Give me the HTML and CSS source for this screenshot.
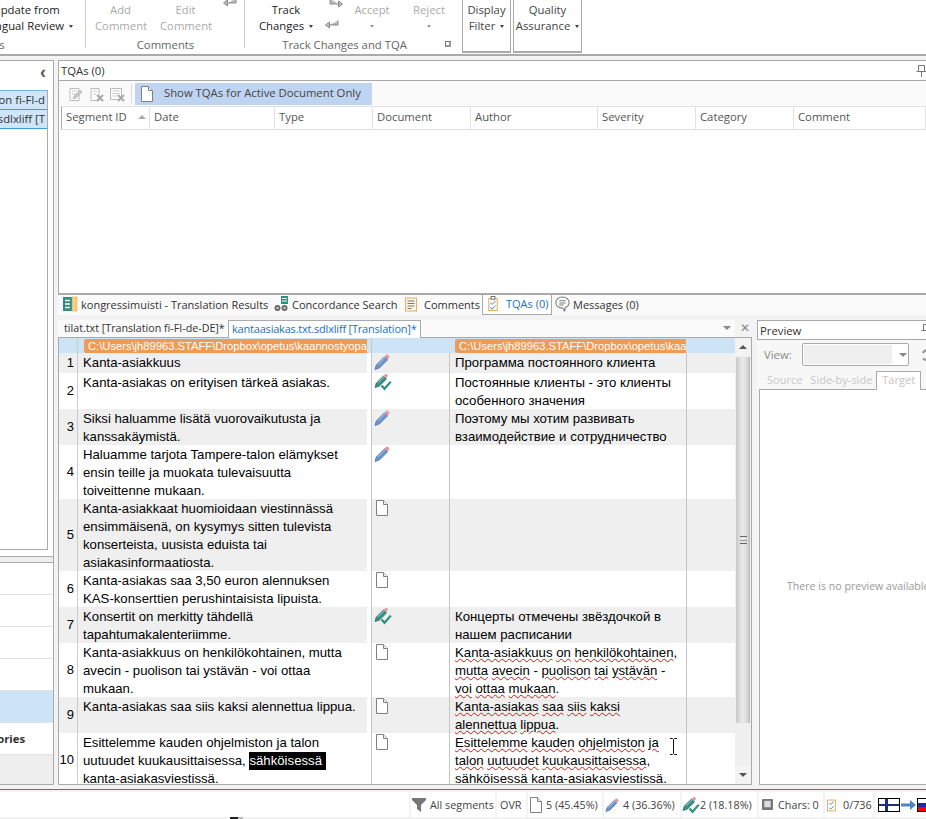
FILE: index.html
```html
<!DOCTYPE html>
<html lang="en">
<head>
    <meta charset="UTF-8">
    <meta name="viewport" content="width=device-width, initial-scale=1.0">
    <title>Editor - kantaasiakas.txt.sdlxliff</title>
    <link rel="stylesheet" href="styles.css">
</head>
<body>
    <svg class="sprite" xmlns="http://www.w3.org/2000/svg">
        <symbol id="i-doc" viewBox="0 0 14 16">
            <path d="M1.5 .5H8.5L12.5 4.5V15.5H1.5Z" fill="#fff" stroke="#808080"/>
            <path d="M8.5 .5V4.5H12.5" fill="#eee" stroke="#808080"/>
        </symbol>
        <symbol id="i-pencil" viewBox="0 0 16 16">
            <path d="M1 15.5L2.2 11L10.5 2.8L13.6 5.8L5.4 14Z" fill="#6d94c9" stroke="#4d77ad" stroke-width=".8"/>
            <path d="M4 10.5L11 3.6" stroke="#b7cdea" fill="none"/>
            <path d="M10.8 2.4L12.4 .8C13 .4 13.6 .4 14.2 1L15.1 1.9C15.6 2.5 15.6 3.1 15.2 3.6L13.7 5.4Z" fill="#e8969c"/>
        </symbol>
        <symbol id="i-done" viewBox="0 0 18 18">
            <path d="M1 14.5L2.2 10.2L9.5 3L12.5 6L5.2 13.2Z" fill="#3c8f82" stroke="#2b7468" stroke-width=".8"/>
            <path d="M4 9.8L10 3.8" stroke="#a6d3cb" fill="none"/>
            <path d="M9.8 2.6L11.3 1.2C11.9 .8 12.4 .8 13 1.3L13.6 1.9C14.1 2.5 14 3 13.6 3.5L12.4 5Z" fill="#e8969c"/>
            <path d="M7.5 12.5L10.5 15.8L16.8 8.6" fill="none" stroke="#2f8f7d" stroke-width="2.2"/>
        </symbol>
        <symbol id="i-return" viewBox="0 0 16 12">
            <path d="M14 1.5V6H5.5M5.5 3V9L1.5 6Z" fill="#bbb" stroke="#8a8a8a"/>
        </symbol>
        <symbol id="i-forward" viewBox="0 0 16 12">
            <path d="M2 .5V6H10.5M10.5 3V9L14.5 6Z" fill="#bbb" stroke="#8a8a8a"/>
        </symbol>
        <symbol id="i-pin" viewBox="0 0 10 12">
            <path d="M2.5 .5H8.5V6.5H2.5ZM.5 6.5H10M5.5 6.5V12" fill="#fff" stroke="#777"/>
        </symbol>
    </svg>

    <header class="ribbon">
        <section class="rgroup rgroup-update">
            <div class="rbtns">
                <div class="rbtn">Update from<br>Bilingual Review <i class="caret"></i></div>
            </div>
            <div class="rlabel">Actions</div>
        </section>
        <section class="rgroup rgroup-comments">
            <div class="rbtns">
                <div class="rbtn off">Add<br>Comment</div>
                <div class="rbtn off">Edit<br>Comment</div>
                <svg class="top-arrow"><use href="#i-return"/></svg>
            </div>
            <div class="rlabel">Comments</div>
        </section>
        <section class="rgroup rgroup-track">
            <div class="rbtns">
                <div class="rbtn">Track<br>Changes <i class="caret"></i></div>
                <div class="change-arrows">
                    <svg class="arrow-small forward"><use href="#i-forward"/></svg>
                    <svg class="arrow-small"><use href="#i-return"/></svg>
                </div>
                <div class="rbtn off accept">Accept<br><i class="caret"></i></div>
                <div class="rbtn off reject">Reject<br><i class="caret"></i></div>
            </div>
            <div class="rlabel">Track Changes and TQA<span class="launcher"></span></div>
        </section>
        <section class="rbox filter">Display<br>Filter <i class="caret"></i></section>
        <section class="rbox qa">Quality<br>Assurance <i class="caret"></i></section>
    </header>

    <main class="workspace">
        <aside class="nav">
            <div class="nav-head"><span class="chevron">‹</span></div>
            <div class="file-box">
                <div class="file-row">Translation fi-FI-d</div>
                <div class="file-row">kantaasiakas.txt.sdlxliff [T</div>
            </div>
            <div class="nav-band"></div>
            <div class="nav-link"></div>
            <div class="nav-link"></div>
            <div class="nav-link"></div>
            <div class="nav-link"></div>
            <div class="nav-link active"></div>
            <div class="nav-link bold">Translation Memories</div>
            <div class="nav-foot"></div>
        </aside>

        <div class="center">
            <section class="tqa-panel">
                <div class="panel-head">TQAs (0)<svg class="pin"><use href="#i-pin"/></svg></div>
                <div class="tqa-tools">
                    <svg class="tool-ico" viewBox="0 0 16 16"><path d="M3 2.5H12V14.5H3Z" fill="#fff" stroke="#bbb"/><path d="M5 5H10M5 8H8" stroke="#ccc"/><path d="M6 13L7 10L13 4L15 6L9 12Z" fill="#c8c8c8" stroke="#aaa" stroke-width=".6"/></svg>
                    <svg class="tool-ico" viewBox="0 0 16 16"><path d="M3 2.5H11V14.5H3Z" fill="#fff" stroke="#bbb"/><path d="M5 5H9M5 8H8" stroke="#ccc"/><path d="M9 9L15 15M15 9L9 15" stroke="#aaa" stroke-width="2"/></svg>
                    <svg class="tool-ico" viewBox="0 0 16 16"><path d="M1.5 2.5H12.5V13.5H1.5Z" fill="#fff" stroke="#bbb"/><path d="M3.5 5H10.5M3.5 7.5H10.5M3.5 10H8" stroke="#ccc"/><path d="M9 9L15 15M15 9L9 15" stroke="#aaa" stroke-width="2"/></svg>
                    <span class="tool-sep"></span>
                    <div class="tool-toggle"><svg class="doc"><use href="#i-doc"/></svg>Show TQAs for Active Document Only</div>
                </div>
                <div class="tqa-table">
                    <div class="th">Segment ID<i class="sort"></i></div>
                    <div class="th">Date</div>
                    <div class="th">Type</div>
                    <div class="th">Document</div>
                    <div class="th">Author</div>
                    <div class="th">Severity</div>
                    <div class="th">Category</div>
                    <div class="th">Comment</div>
                </div>
            </section>

            <nav class="tool-tabs">
                <div class="ttab first">
                    <svg class="ttab-ico" viewBox="0 0 15 16"><rect x="0" y="1" width="9" height="14" fill="#2f8f7d"/><rect x="9" y="1" width="5" height="14" fill="#f3cf8a" stroke="#d8a74d" stroke-width=".6"/><path d="M2 4.5H7M2 8H7M2 11.5H7" stroke="#fff" stroke-width="1.4"/></svg>
                    kongressimuisti - Translation Results
                </div>
                <div class="ttab conc">
                    <svg class="ttab-ico" viewBox="0 0 15 16"><circle cx="3.5" cy="12" r="3" fill="#666"/><circle cx="10.5" cy="12" r="3" fill="#666"/><circle cx="3.5" cy="12" r="1.2" fill="#ccc"/><circle cx="10.5" cy="12" r="1.2" fill="#ccc"/><rect x="7" y="0" width="7" height="8" fill="#2f8f7d"/><path d="M8 2.5H13M8 5H13" stroke="#fff"/></svg>
                    Concordance Search
                </div>
                <div class="ttab comm">
                    <svg class="ttab-ico small" viewBox="0 0 12 14"><rect x=".5" y=".5" width="11" height="13" fill="#fdf6e4" stroke="#dcb267"/><path d="M2.5 3.5H9.5M2.5 6H9.5M2.5 8.5H9.5M2.5 11H6.5" stroke="#777"/></svg>
                    Comments
                </div>
                <div class="ttab active">
                    <svg class="ttab-ico small" viewBox="0 0 12 16"><rect x="1.5" y="2.5" width="9" height="13" fill="#fff" stroke="#e0a94f"/><rect x="4" y=".5" width="4" height="3" fill="#fff" stroke="#666"/><path d="M3 7L5 9L9 5M3 12L5 14L9 10" fill="none" stroke="#3f7fb5"/></svg>
                    TQAs (0)
                </div>
                <div class="ttab msg">
                    <svg class="ttab-ico" viewBox="0 0 14 15"><path d="M7 1C3.4 1 .8 3.2 .8 6.2C.8 9.2 3.4 11.2 7 11.2L9 14L9.6 10.8C11.8 10 13.2 8.3 13.2 6.2C13.2 3.2 10.6 1 7 1Z" fill="#fff" stroke="#777"/><path d="M4 4.5H10M4 6.5H10M4 8.5H8" stroke="#777"/></svg>
                    Messages (0)
                </div>
            </nav>

            <div class="work-row">
                <section class="editor">
                    <div class="doc-tabs">
                        <div class="dtab">tilat.txt [Translation fi-FI-de-DE]*</div>
                        <div class="dtab active">kantaasiakas.txt.sdlxliff [Translation]*</div>
                        <div class="doc-tools"><i class="caret big"></i><span class="close">✕</span></div>
                    </div>
                    <div class="grid-wrap">
                        <div class="seg-grid">
                            <div class="seg head">
                                <div class="num"></div>
                                <div class="src"><span class="path">C:\Users\jh89963.STAFF\Dropbox\opetus\kaannostyopaja\kantaasiakas.txt</span></div>
                                <div class="gut"></div>
                                <div class="stat"></div>
                                <div class="trg"><span class="path">C:\Users\jh89963.STAFF\Dropbox\opetus\kaannostyopaja\kantaasiakas.txt</span></div>
                                <div class="rest"></div>
                            </div>

                            <div class="seg alt">
                                <div class="num">1</div>
                                <div class="src">Kanta-asiakkuus</div>
                                <div class="gut"></div>
                                <div class="stat"><svg class="ico-pencil"><use href="#i-pencil"/></svg></div>
                                <div class="trg">Программа постоянного клиента</div>
                                <div class="rest"></div>
                            </div>
                            <div class="seg">
                                <div class="num">2</div>
                                <div class="src">Kanta-asiakas on erityisen tärkeä asiakas.</div>
                                <div class="gut"></div>
                                <div class="stat"><svg class="ico-done"><use href="#i-done"/></svg></div>
                                <div class="trg">Постоянные клиенты - это клиенты особенного значения</div>
                                <div class="rest"></div>
                            </div>
                            <div class="seg alt">
                                <div class="num">3</div>
                                <div class="src">Siksi haluamme lisätä vuorovaikutusta ja kanssakäymistä.</div>
                                <div class="gut"></div>
                                <div class="stat"><svg class="ico-pencil"><use href="#i-pencil"/></svg></div>
                                <div class="trg">Поэтому мы хотим развивать взаимодействие и сотрудничество</div>
                                <div class="rest"></div>
                            </div>
                            <div class="seg">
                                <div class="num">4</div>
                                <div class="src">Haluamme tarjota Tampere-talon elämykset ensin teille ja muokata tulevaisuutta toiveittenne mukaan.</div>
                                <div class="gut"></div>
                                <div class="stat"><svg class="ico-pencil"><use href="#i-pencil"/></svg></div>
                                <div class="trg"></div>
                                <div class="rest"></div>
                            </div>
                            <div class="seg alt">
                                <div class="num">5</div>
                                <div class="src">Kanta-asiakkaat huomioidaan viestinnässä ensimmäisenä, on kysymys sitten tulevista konserteista, uusista eduista tai asiakasinformaatiosta.</div>
                                <div class="gut"></div>
                                <div class="stat"><svg class="ico-doc"><use href="#i-doc"/></svg></div>
                                <div class="trg"></div>
                                <div class="rest"></div>
                            </div>
                            <div class="seg">
                                <div class="num">6</div>
                                <div class="src">Kanta-asiakas saa 3,50 euron alennuksen KAS-konserttien perushintaisista lipuista.</div>
                                <div class="gut"></div>
                                <div class="stat"><svg class="ico-doc"><use href="#i-doc"/></svg></div>
                                <div class="trg"></div>
                                <div class="rest"></div>
                            </div>
                            <div class="seg alt">
                                <div class="num">7</div>
                                <div class="src">Konsertit on merkitty tähdellä tapahtumakalenteriimme.</div>
                                <div class="gut"></div>
                                <div class="stat"><svg class="ico-done"><use href="#i-done"/></svg></div>
                                <div class="trg">Концерты отмечены звёздочкой в нашем расписании</div>
                                <div class="rest"></div>
                            </div>
                            <div class="seg">
                                <div class="num">8</div>
                                <div class="src">Kanta-asiakkuus on henkilökohtainen, mutta avecin - puolison tai ystävän - voi ottaa mukaan.</div>
                                <div class="gut"></div>
                                <div class="stat"><svg class="ico-doc"><use href="#i-doc"/></svg></div>
                                <div class="trg"><u>Kanta-asiakkuus</u> <u>on</u> <u>henkilökohtainen</u>, <u>mutta</u> <u>avecin</u> - <u>puolison</u> <u>tai</u> <u>ystävän</u> - <u>voi</u> <u>ottaa</u> <u>mukaan</u>.</div>
                                <div class="rest"></div>
                            </div>
                            <div class="seg alt">
                                <div class="num">9</div>
                                <div class="src">Kanta-asiakas saa siis kaksi alennettua lippua.</div>
                                <div class="gut"></div>
                                <div class="stat"><svg class="ico-doc"><use href="#i-doc"/></svg></div>
                                <div class="trg"><u>Kanta-asiakas</u> <u>saa</u> <u>siis</u> <u>kaksi</u> <u>alennettua</u> <u>lippua</u>.</div>
                                <div class="rest"></div>
                            </div>
                            <div class="seg">
                                <div class="num">10</div>
                                <div class="src">Esittelemme kauden ohjelmiston ja talon uutuudet kuukausittaisessa, <span class="selected">sähköisessä </span> <span class="nobreak">kanta-asiakasviestissä.</span></div>
                                <div class="gut"></div>
                                <div class="stat"><svg class="ico-doc"><use href="#i-doc"/></svg></div>
                                <div class="trg"><u>Esittelemme</u> <u>kauden</u> <u>ohjelmiston</u> <u>ja</u> <u>talon</u> <u>uutuudet</u> <u>kuukausittaisessa</u>, <u>sähköisessä</u> <u>kanta-asiakasviestissä</u>.</div>
                                <div class="rest"></div>
                            </div>
                        </div>
                        <div class="vscroll">
                            <div class="sbtn"><i class="up"></i></div>
                            <div class="thumb"><span class="grip"></span></div>
                            <div class="strack"></div>
                            <div class="sbtn"><i class="caret big"></i></div>
                        </div>
                        <svg class="ibeam" viewBox="0 0 9 17"><path d="M1 .5H3.5L4.5 1.5L5.5 .5H8M4.5 1.5V15.5M1 16.5H3.5L4.5 15.5L5.5 16.5H8" fill="none" stroke="#111"/></svg>
                    </div>
                </section>

                <section class="preview">
                    <div class="panel-head">Preview<svg class="pin"><use href="#i-pin"/></svg></div>
                    <div class="view-row">
                        <span class="view-label">View:</span>
                        <div class="combo"><span class="combo-field"></span><i class="caret big"></i></div>
                        <svg class="refresh" viewBox="0 0 12 14"><path d="M10 3.5A5 5 0 0 0 2 5M2 10.5A5 5 0 0 0 10 9" fill="none" stroke="#999" stroke-width="2.4"/></svg>
                    </div>
                    <div class="prev-tabs">
                        <span class="ptab">Source</span>
                        <span class="ptab">Side-by-side</span>
                        <span class="ptab active">Target</span>
                    </div>
                    <div class="prev-body">There is no preview available</div>
                </section>
            </div>
        </div>
    </main>

    <div class="blue-line"></div>

    <footer class="statusbar">
        <div class="st grow"></div>
        <div class="st w-filter">
            <svg class="st-ico funnel" viewBox="0 0 14 14"><path d="M0 0H14V2L9 7V14L5 11V7L0 2Z" fill="#777"/></svg>All segments
        </div>
        <div class="st w-ovr">OVR</div>
        <div class="st w-doc"><svg class="st-doc"><use href="#i-doc"/></svg>5 (45.45%)</div>
        <div class="st w-pen"><svg class="st-ico"><use href="#i-pencil"/></svg>4 (36.36%)</div>
        <div class="st w-done"><svg class="st-done"><use href="#i-done"/></svg>2 (18.18%)</div>
        <div class="st w-chars">
            <svg class="st-key" viewBox="0 0 12 12"><rect width="12" height="12" rx="1" fill="#777"/><rect x="2.5" y="2" width="7" height="7" fill="#ddd"/></svg>Chars: 0
        </div>
        <div class="st w-tqa">
            <svg class="st-clip" viewBox="0 0 10 14"><rect x=".5" y="1.5" width="9" height="12" fill="#fff" stroke="#e0a94f"/><path d="M2.5 5L4 6.5L7.5 3.5M2.5 10L4 11.5L7.5 8.5" fill="none" stroke="#3f7fb5"/></svg>0/736
        </div>
        <div class="st-flags">
            <div class="flag-fi"></div>
            <svg class="flag-arrow" viewBox="0 0 15 10"><path d="M0 3.5H9V0L15 5L9 10V6.5H0Z" fill="#4f86c0"/></svg>
            <div class="flag-ru"></div>
        </div>
    </footer>
    <div class="taskbar-bit"></div>
</body>
</html>
```

FILE: styles.css
```css
html, body {
    margin: 0;
    padding: 0;
}
body {
    width: 926px;
    height: 819px;
    overflow: hidden;
    display: flex;
    flex-direction: column;
    position: relative;
    background: #f3f3f3;
    font-family: "Open Sans", sans-serif;
    font-size: 11.3px;
    color: #444;
}
.sprite { display: none; }
i { font-style: normal; }

.caret {
    display: inline-block;
    border-left: 2.5px solid transparent;
    border-right: 2.5px solid transparent;
    border-top: 3px solid #444;
    vertical-align: middle;
    margin-left: 2px;
}
.caret.big {
    border-left-width: 4px;
    border-right-width: 4px;
    border-top: 4px solid #888;
    margin-left: 0;
}

/* ribbon */
.ribbon {
    height: 54px;
    flex: none;
    display: flex;
    background: #fff;
    border-bottom: 2px solid #aaa;
}
.rgroup {
    display: flex;
    flex-direction: column;
    height: 53px;
    background: linear-gradient(#ccc, #ccc) right top / 1px 48px no-repeat;
    overflow: hidden;
    flex: none;
}
.rbtns {
    display: flex;
    flex: none;
    height: 35px;
    padding-top: 2px;
}
.rbtn {
    line-height: 16px;
    text-align: center;
    white-space: nowrap;
    color: #222;
    flex: none;
}
.rbtn.off { color: #aaa; width: 51px; }
.rbtn.off .caret { border-top-color: #999; margin-left: 0; }
.rlabel {
    line-height: 16px;
    text-align: center;
    color: #666;
    white-space: nowrap;
    position: relative;
}
.rgroup-update { width: 86px; }
.rgroup-update .rbtns { justify-content: flex-end; padding-right: 13px; }
.rgroup-update .rlabel { text-align: left; margin-left: -34px; }
.rgroup-comments { width: 159px; }
.rgroup-comments .rbtns { padding-left: 9px; gap: 14px; }
.top-arrow { width: 16px; height: 12px; margin: -5px 0 0 -3px; flex: none; }
.rgroup-track { width: 217px; background: none; }
.rgroup-track .rbtns { padding-left: 14px; }
.rgroup-track .rbtn:first-child { width: 54px; }
.change-arrows {
    width: 26px;
    margin-left: 11px;
    display: flex;
    flex-direction: column;
    margin-top: -4px;
    gap: 9px;
    flex: none;
}
.arrow-small { width: 16px; height: 12px; }
.arrow-small.forward { margin-left: 4px; }
.rbtn.accept { width: 60px; margin-left: -8px; }
.rbtn.reject { width: 54px; }
.rgroup-track .rlabel { width: 199px; }
.launcher {
    position: absolute;
    right: -7px;
    top: 4px;
    width: 6px;
    height: 6px;
    border-left: 1px solid #777;
    border-top: 1px solid #777;
    border-right: 2px solid #999;
    border-bottom: 2px solid #999;
    box-sizing: border-box;
}
.rbox {
    flex: none;
    height: 53px;
    box-sizing: border-box;
    padding-top: 2px;
    line-height: 16px;
    text-align: center;
    border: 1px solid #aaa;
    border-top: none;
    border-bottom-width: 2px;
    white-space: nowrap;
}
.filter { width: 49px; }
.qa { width: 69px; margin-left: 2px; }

/* main layout */
.workspace {
    height: 725px;
    flex: none;
    display: flex;
    padding: 4px 0 1px;
}
.nav {
    width: 53px;
    flex: none;
    display: flex;
    flex-direction: column;
    background: #fff;
    border-top: 1px solid #aaa;
    border-right: 1px solid #aaa;
    border-bottom: 1px solid #aaa;
    overflow: hidden;
}
.nav-head {
    height: 29px;
    flex: none;
    display: flex;
    justify-content: flex-end;
    padding-right: 7px;
    box-sizing: border-box;
}
.chevron {
    font: bold 18px/22px "Liberation Sans", sans-serif;
    color: #555;
}
.file-box {
    flex: none;
    width: 48px;
    height: 460px;
    border-right: 1px solid #aaa;
    border-bottom: 1px solid #aaa;
    border-top: 1px solid #7fb4de;
    box-sizing: border-box;
}
.file-row {
    height: 18px;
    display: flex;
    justify-content: flex-end;
    white-space: nowrap;
    overflow: hidden;
    line-height: 17px;
    padding-right: 2px;
    color: #333;
    background: #cfe5f8;
    border-bottom: 1px solid #3f9bdc;
}
.nav-band {
    height: 5px;
    flex: none;
    margin-top: 6px;
    background: #eee;
    border-top: 1px solid #aaa;
    border-bottom: 1px solid #aaa;
}
.nav-link {
    height: 31px;
    flex: none;
    border-bottom: 1px solid #e2e2e2;
    display: flex;
    justify-content: flex-end;
    align-items: center;
    padding-right: 28px;
    white-space: nowrap;
    color: #333;
}
.nav-link.active { background: #cde4f7; }
.nav-link.bold { font-weight: 700; }
.nav-foot { flex: 1; background: #eee; }

.center {
    width: 868px;
    margin-left: 4px;
    flex: none;
    display: flex;
    flex-direction: column;
}

/* panels */
.panel-head {
    height: 19px;
    flex: none;
    line-height: 19px;
    padding-left: 2px;
    background: #fff;
    border-top: 1px solid #aaa;
    border-bottom: 1px solid #aaa;
    display: flex;
    align-items: center;
    position: relative;
    color: #333;
}
.pin {
    position: absolute;
    right: 0;
    top: 4px;
    width: 10px;
    height: 12px;
}
.tqa-panel {
    height: 235px;
    flex: none;
    box-sizing: border-box;
    background: #fff;
    border-left: 1px solid #aaa;
    border-bottom: 2px solid #aaa;
    display: flex;
    flex-direction: column;
}
.tqa-tools {
    height: 25px;
    flex: none;
    background: #fafafa;
    display: flex;
    align-items: center;
    padding-left: 8px;
    box-sizing: border-box;
}
.tool-ico { width: 16px; height: 16px; margin-right: 5px; flex: none; }
.tool-sep { width: 1px; height: 19px; background: #ddd; margin: 0 3px 0 1px; }
.tool-toggle {
    width: 237px;
    height: 22px;
    display: flex;
    align-items: center;
    background: #bfd4f1;
    color: #444;
    line-height: 20px;
    white-space: nowrap;
    box-sizing: border-box;
    padding: 0 0 2px 5px;
}
.doc { width: 14px; height: 16px; margin: 2px 10px 0 0; }
.tqa-table {
    height: 24px;
    margin-left: 2px;
    flex: none;
    display: grid;
    grid-template-columns: 88px 125px 98px 98px 127px 98px 98px 1fr;
    border-top: 1px solid #e2e2e2;
    border-left: 1px solid #aaa;
    border-bottom: 1px solid #e2e2e2;
    box-sizing: border-box;
}
.th {
    border-right: 1px solid #e2e2e2;
    line-height: 20px;
    padding-left: 4px;
    white-space: nowrap;
    position: relative;
    color: #555;
}
.sort {
    position: absolute;
    right: 3px;
    top: 8px;
    border-left: 4px solid transparent;
    border-right: 4px solid transparent;
    border-bottom: 4px solid #aaa;
}

/* tool tabs */
.tool-tabs {
    height: 20px;
    flex: none;
    background: #fafafa;
    display: flex;
    align-items: center;
    font-size: 11px;
    color: #333;
    white-space: nowrap;
}
.ttab {
    display: flex;
    align-items: center;
    height: 20px;
    padding-bottom: 2px;
    box-sizing: border-box;
}
.ttab-ico { width: 15px; height: 16px; margin-right: 3px; flex: none; }
.ttab-ico.small { width: 12px; height: 15px; margin-right: 7px; }
.ttab.first { margin-left: 5px; width: 211px; }
.ttab.conc { width: 131px; }
.ttab.comm { width: 77px; }
.ttab.active {
    width: 70px;
    padding-left: 4px;
    color: #1c72bd;
    background: #fff;
    border: 1px solid #aaa;
    border-top: none;
}
.ttab.msg { margin-left: 3px; }

.work-row {
    flex: 1;
    display: flex;
    margin-top: 5px;
    min-height: 0;
}

/* editor */
.editor {
    width: 694px;
    flex: none;
    display: flex;
    flex-direction: column;
}
.doc-tabs {
    height: 17px;
    flex: none;
    display: flex;
    background: #fafafa;
    margin-right: 17px;
    position: relative;
    font-size: 11px;
    white-space: nowrap;
    color: #333;
}
.dtab {
    height: 17px;
    line-height: 16px;
    padding-left: 6px;
    width: 164px;
    flex: none;
    font-size: 10.7px;
}
.dtab.active {
    width: 193px;
    height: 18px;
    padding-left: 3px;
    box-sizing: border-box;
    font-size: 11px;
    letter-spacing: -.2px;
    color: #1c72bd;
    background: #fff;
    border: 1px solid #aaa;
    border-bottom: none;
    position: relative;
    z-index: 1;
}
.doc-tools {
    position: absolute;
    left: 665px;
    top: 0;
    width: 30px;
    height: 16px;
    display: flex;
    align-items: center;
    gap: 9px;
}
.close {
    font: bold 12px/14px "DejaVu Sans", sans-serif;
    color: #888;
}
.grid-wrap {
    flex: 1;
    min-height: 0;
    display: flex;
    position: relative;
    box-sizing: border-box;
    background: #fff;
    border: 1px solid #aaa;
}
.seg-grid {
    width: 676px;
    flex: none;
    overflow: hidden;
    font-family: "Liberation Sans", sans-serif;
    font-size: 13.2px;
    line-height: 18px;
    color: #000;
}
.seg {
    display: grid;
    grid-template-columns: 19px 289px 4px 78px 238px 48px;
    min-height: 20px;
    background: #fff;
}
.seg.alt { background: #efefef; }
.seg.head {
    min-height: 15px;
    background: #cde4f7;
    line-height: 14px;
    font-size: 11.2px;
    color: #fff;
}
.num {
    border-right: 1px solid #ccc;
    display: flex;
    align-items: center;
    justify-content: flex-end;
    padding-right: 3px;
    font-size: 13px;
}
.src { padding: 1px 6px 0 5px; margin-bottom: -1px; }
.gut { background: #fff; }
.head .gut { background: #cde4f7; }
.stat {
    border-left: 1px solid #c6c6c6;
    padding-left: 2px;
}
.stat svg { display: block; }
.ico-pencil { width: 16px; height: 16px; margin-top: 1px; }
.ico-done { width: 18px; height: 18px; }
.ico-doc { width: 14px; height: 16px; margin: 1px 0 0 1px; }
.trg {
    border-left: 1px solid #c6c6c6;
    border-right: 1px solid #c6c6c6;
    padding: 1px 6px 0 5px;
    margin-bottom: -1px;
}
.head .src, .head .trg {
    padding: 1px 0 0 5px;
    margin-bottom: 0;
    overflow: hidden;
    white-space: nowrap;
    border-color: transparent;
}
.head .src { padding-left: 6px; }
.path {
    display: block;
    background: #ee9b55;
    padding-left: 4px;
    border-radius: 2px 0 0 2px;
    overflow: hidden;
}
u {
    text-decoration: underline wavy #e01010 1px;
    text-underline-offset: 1px;
}
.selected {
    display: inline-block;
    background: #000;
    color: #fff;
    white-space: pre;
}
.nobreak { white-space: nowrap; }

/* scrollbar */
.vscroll {
    width: 16px;
    flex: none;
    display: flex;
    flex-direction: column;
    background: #f0f0f0;
}
.sbtn {
    height: 18px;
    flex: none;
    display: flex;
    align-items: center;
    justify-content: center;
    background: #f3f3f3;
}
.up {
    border-left: 4px solid transparent;
    border-right: 4px solid transparent;
    border-bottom: 4px solid #555;
}
.sbtn .caret { border-top-color: #555; }
.thumb {
    height: 366px;
    flex: none;
    margin: 1px 1px 0;
    background: linear-gradient(to right, #c8c8c8, #ececec 45%, #d8d8d8 80%, #b8b8b8);
    display: flex;
    align-items: center;
    justify-content: center;
}
.grip {
    width: 7px;
    height: 6px;
    border-top: 1px solid #666;
    border-bottom: 1px solid #666;
    background: linear-gradient(#999, #999) center / 100% 1px no-repeat;
}
.strack { flex: 1; }
.ibeam {
    position: absolute;
    left: 610px;
    top: 400px;
    width: 9px;
    height: 17px;
}

/* preview */
.preview {
    width: 176px;
    margin-left: 5px;
    flex: none;
    display: flex;
    flex-direction: column;
    background: #f7f7f7;
}
.preview .panel-head { border-left: 1px solid #aaa; padding-left: 2px; height: 18px; line-height: 17px; }
.preview .pin { left: 163px; right: auto; top: 3px; }
.view-row {
    height: 23px;
    margin-top: 3px;
    flex: none;
    display: flex;
    align-items: center;
    padding-left: 7px;
    color: #888;
}
.view-label { width: 39px; }
.combo {
    width: 109px;
    height: 23px;
    box-sizing: border-box;
    border: 1px solid #aaa;
    border-radius: 2px;
    display: flex;
    align-items: center;
    padding: 1px;
    background: #fff;
}
.combo-field { width: 88px; height: 100%; background: #efefef; margin-right: 7px; }
.refresh { width: 12px; height: 14px; margin-left: 12px; flex: none; }
.prev-tabs {
    height: 19px;
    margin-top: 4px;
    flex: none;
    display: flex;
    align-items: flex-end;
    padding-left: 10px;
    font-size: 11px;
    color: #c8c8c8;
    white-space: nowrap;
}
.ptab { margin-right: 8px; line-height: 15px; padding-bottom: 2px; }
.ptab.active {
    margin: 0 0 -1px -4px;
    padding: 0 5px 3px;
    width: 33px;
    background: #fff;
    color: #c4c4c4;
    border: 1px solid #aaa;
    border-bottom: none;
    z-index: 1;
}
.prev-body {
    flex: 1;
    margin-left: 2px;
    box-sizing: border-box;
    background: #fff;
    border: 1px solid #aaa;
    display: flex;
    align-items: center;
    justify-content: flex-start;
    padding: 0 0 2px 27px;
    font-size: 10.6px;
    color: #999;
    white-space: nowrap;
}

/* status bar */
.blue-line {
    height: 1px;
    flex: none;
    margin-top: 3px;
    background: #4d73ab;
}
.statusbar {
    height: 25px;
    margin-top: 2px;
    flex: none;
    display: flex;
    gap: 2px;
    font-size: 10.8px;
    white-space: nowrap;
    color: #444;
}
.st {
    background: #fff;
    display: flex;
    align-items: center;
    flex: none;
    box-sizing: border-box;
    overflow: hidden;
}
.st.grow { width: 409px; }
.w-filter { width: 84px; padding-left: 1px; }
.funnel { width: 14px; height: 14px; margin: 0 3px 0 0; }
.w-ovr { width: 29px; padding-left: 3px; }
.w-doc { width: 74px; padding-left: 1px; }
.w-pen { width: 76px; padding-left: 1px; }
.w-done { width: 75px; padding-left: 0; }
.st-doc { width: 14px; height: 16px; margin-right: 3px; flex: none; }
.st-ico { width: 14px; height: 14px; margin-right: 4px; flex: none; }
.st-done { width: 18px; height: 18px; margin-right: 0; flex: none; }
.w-chars { width: 64px; padding-left: 3px; }
.st-key { width: 11px; height: 11px; margin-right: 5px; flex: none; }
.w-tqa { width: 48px; padding-left: 2px; }
.st-clip { width: 9px; height: 14px; margin-right: 7px; flex: none; }
.st-flags {
    display: flex;
    align-items: center;
    background: #fff;
    padding-left: 3px;
    width: 60px;
    flex: none;
}
.flag-fi {
    width: 22px;
    height: 14px;
    box-sizing: border-box;
    border: 1px solid #000;
    flex: none;
    background:
        linear-gradient(#1a2f7f, #1a2f7f) 6px 0 / 3px 100% no-repeat,
        linear-gradient(#1a2f7f, #1a2f7f) 0 5px / 100% 2px no-repeat,
        #fff;
}
.flag-arrow { width: 15px; height: 10px; margin: 0 1px; flex: none; }
.flag-ru {
    width: 22px;
    height: 14px;
    flex: none;
    box-sizing: border-box;
    border: 1px solid #000;
    background: linear-gradient(#fff 33%, #1a2f9f 33% 66%, #f00 66%);
}
.taskbar-bit {
    position: absolute;
    left: 230px;
    bottom: 0;
    width: 8px;
    height: 2px;
    background: #222;
    border-right: 5px solid #bbb;
}
```
